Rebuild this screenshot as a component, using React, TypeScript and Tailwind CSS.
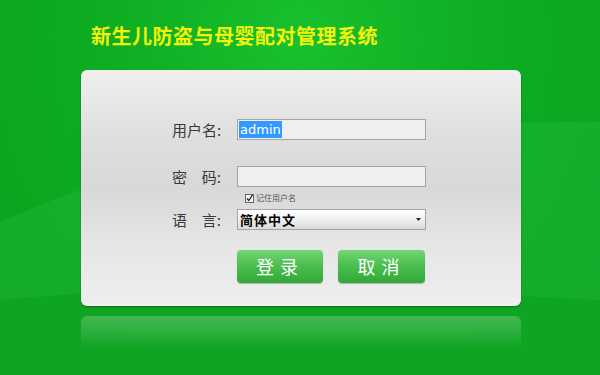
import React from 'react';

const cjk = "font-['Noto_Sans_CJK_SC','Noto_Sans',sans-serif]";

export default function App() {
  return (
    <div className="relative h-[375px] w-full overflow-hidden bg-[#0ca51f]">
      {/* background glow + wave */}
      <div className="absolute inset-0 bg-[radial-gradient(ellipse_at_50%_10%,#18c02e_0%,#0ead22_45%,#0a9f1c_100%)]" />
      <svg className="absolute inset-0" width="600" height="375" viewBox="0 0 600 375">
        <path d="M0 222 C 160 150, 330 120, 600 122 L600 375 L0 375 Z" fill="#20b83a" opacity="0.45" />
        <path d="M0 300 C 200 280, 400 290, 600 300 L600 375 L0 375 Z" fill="#0c9f1d" opacity="0.6" />
      </svg>

      <div className="relative flex flex-col">
        <h1 className={`${cjk} ml-[91px] mt-[22px] text-[20px] font-bold leading-[28px] tracking-[0.5px] text-[#f2f20a]`}>
          新生儿防盗与母婴配对管理系统
        </h1>

        {/* login card */}
        <div className="ml-[81px] mt-[20px] h-[236px] w-[440px] rounded-[6px] bg-[linear-gradient(180deg,#f0f0f0_0%,#e0e0e0_25%,#d8d8d8_50%,#e6e6e6_75%,#efefef_100%)] pl-[91px] pt-[49px] shadow-[0_1px_2px_rgba(0,0,0,0.35)]">
          <div className="flex items-center">
            <span className={`${cjk} w-[56px] text-[15px] leading-[21px] text-[#3a3a3a]`}>用户名:</span>
            <div className="ml-[9px] flex h-[21px] w-[189px] items-center border border-[#a4a4a4] bg-[#efefef] pl-[1px]">
              <span className="bg-[#3399ff] px-[1px] font-['DejaVu_Sans',sans-serif] text-[13px] leading-[17px] text-white">admin</span>
            </div>
          </div>

          <div className="mt-[26px] flex items-center">
            <span className={`${cjk} flex w-[49px] justify-between text-[15px] leading-[21px] text-[#3a3a3a]`}>
              <span>密</span>
              <span>码:</span>
            </span>
            <div className="ml-[16px] h-[21px] w-[189px] border border-[#a4a4a4] bg-[#efefef]" />
          </div>

          <div className="ml-[73px] mt-[5px] flex h-[12px] items-center gap-[2px]">
            <svg width="9" height="9" viewBox="0 0 9 9">
              <rect x="0.5" y="0.5" width="8" height="8" fill="#f4f4f4" stroke="#666" />
              <path d="M2 4.5 L3.8 6.5 L7.5 1" fill="none" stroke="#222" strokeWidth="1.3" />
            </svg>
            <span className={`${cjk} text-[8px] leading-[10px] text-[#555]`}>记住用户名</span>
          </div>

          <div className="mt-[5px] flex items-center">
            <span className={`${cjk} flex w-[49px] justify-between text-[15px] leading-[21px] text-[#3a3a3a]`}>
              <span>语</span>
              <span>言:</span>
            </span>
            <div className="ml-[16px] flex h-[21px] w-[189px] items-center justify-between border border-[#a4a4a4] bg-[linear-gradient(180deg,#ffffff_0%,#f0f0f0_50%,#dadada_100%)] pl-[2px] pr-[4px]">
              <span className={`${cjk} text-[13px] font-bold leading-[17px] tracking-[1px] text-black`}>简体中文</span>
              <svg width="5" height="3" viewBox="0 0 5 3">
                <path d="M0 0 L5 0 L2.5 3 Z" fill="#222" />
              </svg>
            </div>
          </div>

          <div className="ml-[65px] mt-[20px] flex gap-[15px]">
            <button className={`${cjk} h-[33px] w-[86px] rounded-[4px] bg-[linear-gradient(180deg,#74d676_0%,#4cbf50_45%,#32a836_100%)] text-[18px] leading-[33px] tracking-[6px] text-white shadow-[0_1px_1px_rgba(0,0,0,0.25)]`}>
              登录
            </button>
            <button className={`${cjk} h-[33px] w-[87px] rounded-[4px] bg-[linear-gradient(180deg,#74d676_0%,#4cbf50_45%,#32a836_100%)] text-[18px] leading-[33px] tracking-[6px] text-white shadow-[0_1px_1px_rgba(0,0,0,0.25)]`}>
              取消
            </button>
          </div>
        </div>

        {/* reflection */}
        <div className="ml-[81px] mt-[10px] h-[32px] w-[440px] rounded-t-[6px] bg-[linear-gradient(180deg,rgba(255,255,255,0.22)_0%,rgba(255,255,255,0.12)_50%,rgba(255,255,255,0)_100%)]" />
      </div>
    </div>
  );
}
